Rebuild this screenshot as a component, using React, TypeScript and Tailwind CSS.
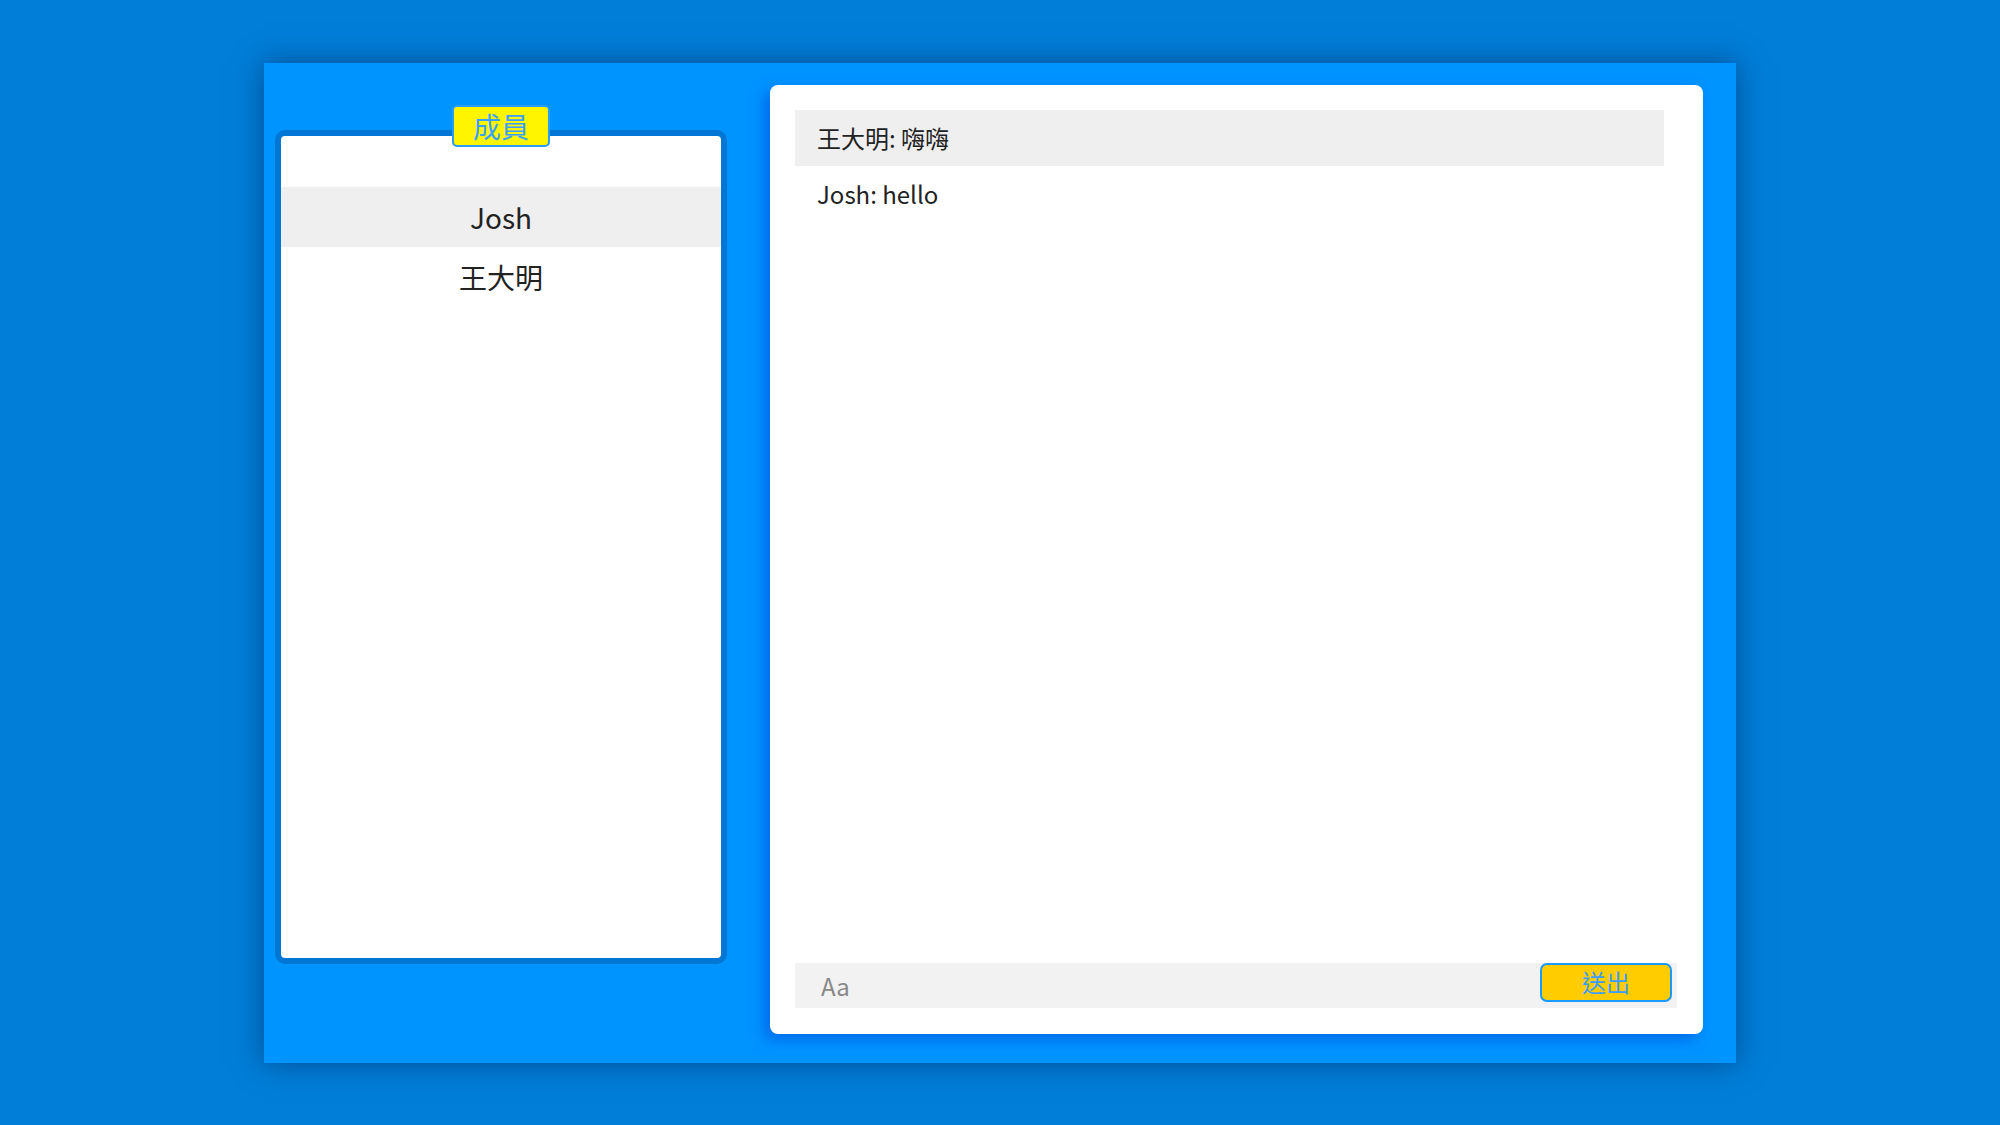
import React, { useState } from 'react';

const font = { fontFamily: '"Noto Sans CJK TC", "Noto Sans", sans-serif' };

const App: React.FC = () => {
  const members = ['Josh', '王大明'];
  const messages = [
    { name: '王大明', text: '嗨嗨' },
    { name: 'Josh', text: 'hello' },
  ];
  const [draft, setDraft] = useState('');

  return (
    <div className="w-full h-[1125px] bg-[#007ed8] flex items-center justify-center" style={font}>
      <div className="w-[1472px] h-[1000px] bg-[#0094ff] flex items-start shadow-[0_0_28px_rgba(0,40,90,0.55)]">
        {/* members */}
        <div className="relative ml-[11px] mt-[67px] w-[452px] h-[834px] border-[6px] border-[#0077d5] rounded-[10px] bg-white">
          <div className="absolute left-1/2 -translate-x-1/2 -top-[31px] w-[98px] h-[42px] bg-[#fff500] border-2 border-[#2a9cf5] rounded-[5px] flex items-center justify-center text-[28px] text-[#3aa0ff] leading-none">
            成員
          </div>
          <ul className="pt-[51px]">
            {members.map((m, i) => (
              <li
                key={m}
                className={`h-[60px] flex items-center justify-center text-[28px] text-[#222] ${
                  i === 0 ? 'bg-[#efefef]' : ''
                }`}
              >
                {m}
              </li>
            ))}
          </ul>
        </div>

        {/* chat */}
        <div className="ml-[43px] mt-[22px] w-[933px] h-[949px] bg-white rounded-[8px] flex flex-col pl-[25px] pt-[25px] pb-[26px] shadow-[-6px_6px_14px_rgba(0,80,220,0.6)]">
          <div className="flex-1 w-[869px]">
            {messages.map((msg, i) => (
              <div
                key={i}
                className={`h-[56px] flex items-center pl-[22px] text-[24px] text-[#222] ${
                  i === 0 ? 'bg-[#efefef]' : ''
                }`}
              >
                {msg.name}: {msg.text}
              </div>
            ))}
          </div>
          <div className="w-[882px] h-[45px] bg-[#f2f2f2] flex items-start">
            <input
              value={draft}
              onChange={(e) => setDraft(e.target.value)}
              placeholder="Aa"
              className="flex-1 h-[45px] bg-transparent pl-[26px] text-[24px] text-[#333] placeholder:text-[#888] outline-none"
              style={font}
            />
            <button
              className="mr-[5px] w-[132px] h-[39px] bg-[#ffcc00] border-2 border-[#1a9aff] rounded-[7px] text-[24px] text-[#3a9cff] leading-none flex items-center justify-center"
              style={font}
            >
              送出
            </button>
          </div>
        </div>
      </div>
    </div>
  );
};

export default App;
